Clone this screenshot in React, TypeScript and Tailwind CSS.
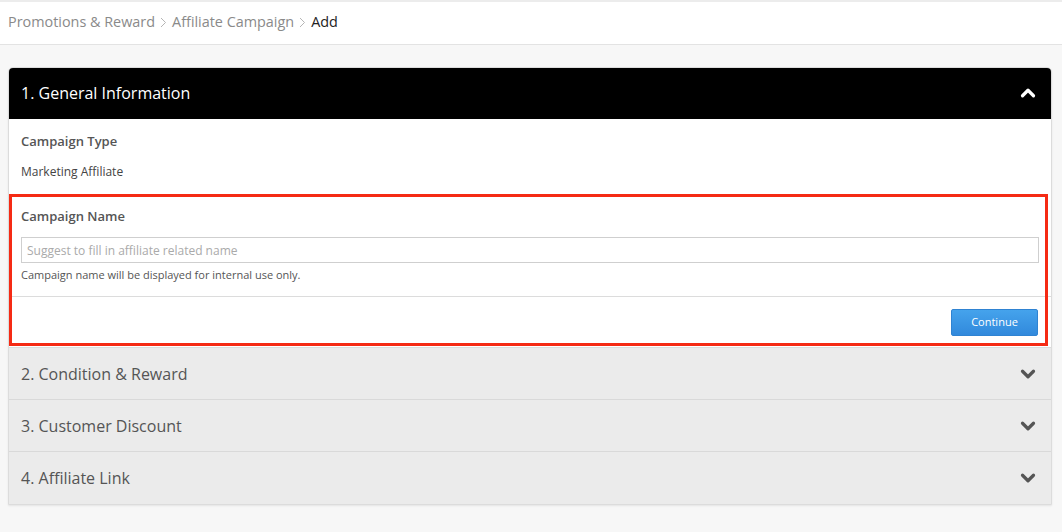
import { ChevronDown, ChevronUp } from 'lucide-react';

const font = { fontFamily: '"Open Sans", "Liberation Sans", sans-serif' };

function Crumb({ children, last }: { children: React.ReactNode; last?: boolean }) {
  return (
    <>
      <span className={last ? 'text-[#222]' : 'text-[#8a8a8a]'}>{children}</span>
      {!last && (
        <svg width="7" height="11" viewBox="0 0 7 11" className="mx-[5px] mt-[1px]">
          <path d="M1 1l4.5 4.5L1 10" fill="none" stroke="#b5b5b5" strokeWidth="1" />
        </svg>
      )}
    </>
  );
}

function CollapsedRow({ title }: { title: string }) {
  return (
    <div className="h-[52px] bg-[#ebebeb] border-b border-[#d9d9d9] last:border-b-0 flex items-center justify-between pl-[12px] pr-[12px]">
      <span className="text-[16px] text-[#555]">{title}</span>
      <ChevronDown size={22} strokeWidth={3.5} className="text-[#555]" />
    </div>
  );
}

export default function App() {
  return (
    <div style={font} className="min-h-[532px] bg-[#f7f7f7]">
      {/* Breadcrumb */}
      <header className="h-[45px] bg-white border-t-[2px] border-t-[#ececec] border-b border-b-[#e3e3e3] flex items-center pl-[8px] pb-[2px] text-[14.4px]">
        <Crumb>Promotions &amp; Reward</Crumb>
        <Crumb>Affiliate Campaign</Crumb>
        <Crumb last>Add</Crumb>
      </header>

      <main className="pt-[22px] pl-[8px] pr-[10px] pb-[27px]">
        <div className="border border-[#dcdcdc] rounded-t-[5px] overflow-hidden bg-white shadow-[0_1px_2px_rgba(0,0,0,0.08)]">
          {/* Step 1 header */}
          <div className="h-[51px] bg-black text-white flex items-center justify-between pl-[12px] pr-[12px] pb-[1px]">
            <span className="text-[16px]">1. General Information</span>
            <ChevronUp size={22} strokeWidth={3.5} className="text-white" />
          </div>

          {/* Campaign type */}
          <div className="pt-[13px] pb-[13px] px-[12px]">
            <div className="text-[13px] leading-[18px] font-semibold text-[#555]">Campaign Type</div>
            <div className="mt-[13px] text-[12px] leading-[18px] text-[#444]">Marketing Affiliate</div>
          </div>

          {/* Campaign name (highlighted) */}
          <div className="relative border-b border-[#dcdcdc]">
            <div className="pt-[13px] pb-[14px] px-[12px] border-b border-[#dcdcdc]">
              <div className="text-[13px] leading-[18px] font-semibold text-[#555]">Campaign Name</div>
              <input
                className="mt-[12px] w-full h-[26px] border border-[#cfcfcf] px-[5px] text-[12px] text-[#333] placeholder:text-[#aaa] outline-none"
                style={font}
                placeholder="Suggest to fill in affiliate related name"
              />
              <div className="mt-[5px] text-[11px] leading-[14px] text-[#555]">
                Campaign name will be displayed for internal use only.
              </div>
            </div>
            <div className="flex justify-end pt-[12px] pb-[11px] pr-[13px]">
              <button
                style={font}
                className="w-[87px] h-[27px] rounded-[2px] text-[11px] text-white bg-gradient-to-b from-[#45a3ec] to-[#3189dc] border border-[#2f83d2]"
              >
                Continue
              </button>
            </div>
            <div className="absolute top-0 left-0 right-[3px] bottom-[1px] border-[3px] border-[#f52a14] pointer-events-none" />
          </div>

          <CollapsedRow title="2. Condition & Reward" />
          <CollapsedRow title="3. Customer Discount" />
          <CollapsedRow title="4. Affiliate Link" />
        </div>
      </main>
    </div>
  );
}
